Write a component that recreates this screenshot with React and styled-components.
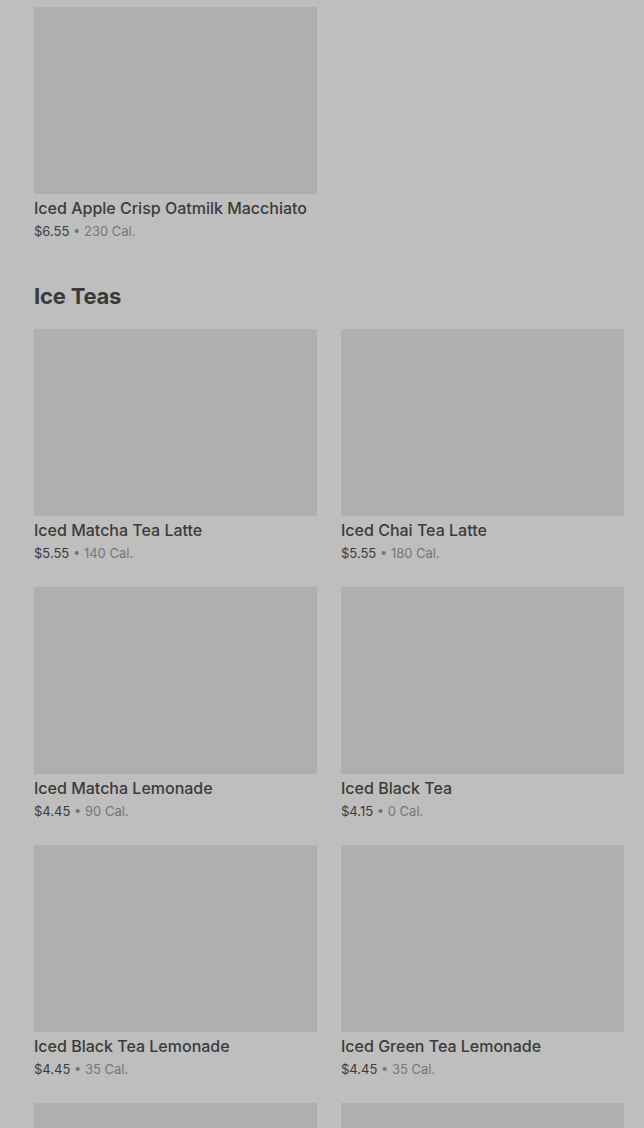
import styled, { createGlobalStyle } from "styled-components";

//------------------------------------------------------------------------

const GlobalStyle = createGlobalStyle`
    html, body {
        margin: 0;
        padding: 0;
        background: #bebebe;
    }
    body {
        font-family: "Inter", "Liberation Sans", sans-serif;
        color: #3a3a3a;
        overflow: hidden;
    }
`;

const Page = styled.div`
    padding: 7px 20px 0 34px;
    height: 1128px;
    box-sizing: border-box;
    overflow: hidden;
    background: #bebebe;
`;

const Grid = styled.div`
    display: grid;
    grid-template-columns: 283px 283px;
    column-gap: 24px;
    row-gap: 25px;
`;

const SectionTitle = styled.h2`
    margin: 42px 0 19px;
    font-size: 22px;
    line-height: 28px;
    font-weight: 700;
    letter-spacing: -0.2px;
    color: #3a3a3a;
`;

const Card = styled.div`
    display: flex;
    flex-direction: column;
`;

const Thumb = styled.div`
    height: 187px;
    background: #afafaf;
`;

const Name = styled.div`
    margin-top: 4px;
    font-size: 16px;
    line-height: 20px;
    font-weight: 500;
    color: #3b3b3b;
    white-space: nowrap;
`;

const Meta = styled.div`
    margin-top: 4px;
    font-size: 13px;
    line-height: 18px;
    color: #777777;
`;

const Price = styled.span`
    color: #3b3b3b;
`;

//------------------------------------------------------------------------

const iceTeas = [
    { name: "Iced Matcha Tea Latte", price: "$5.55", cal: "140 Cal." },
    { name: "Iced Chai Tea Latte", price: "$5.55", cal: "180 Cal." },
    { name: "Iced Matcha Lemonade", price: "$4.45", cal: "90 Cal." },
    { name: "Iced Black Tea", price: "$4.15", cal: "0 Cal." },
    { name: "Iced Black Tea Lemonade", price: "$4.45", cal: "35 Cal." },
    { name: "Iced Green Tea Lemonade", price: "$4.45", cal: "35 Cal." },
    { id: "next-1" },
    { id: "next-2" },
];

function MenuItem({ name, price, cal }) {
    return (
        <Card>
            <Thumb />
            {name && (
                <>
                    <Name>{name}</Name>
                    <Meta>
                        <Price>{price}</Price> • {cal}
                    </Meta>
                </>
            )}
        </Card>
    );
}

export default function App() {
    return (
        <>
            <GlobalStyle />
            <Page>
                <Grid>
                    <MenuItem
                        name="Iced Apple Crisp Oatmilk Macchiato"
                        price="$6.55"
                        cal="230 Cal."
                    />
                </Grid>
                <SectionTitle>Ice Teas</SectionTitle>
                <Grid>
                    {iceTeas.map((item) => (
                        <MenuItem key={item.name || item.id} {...item} />
                    ))}
                </Grid>
            </Page>
        </>
    );
}
